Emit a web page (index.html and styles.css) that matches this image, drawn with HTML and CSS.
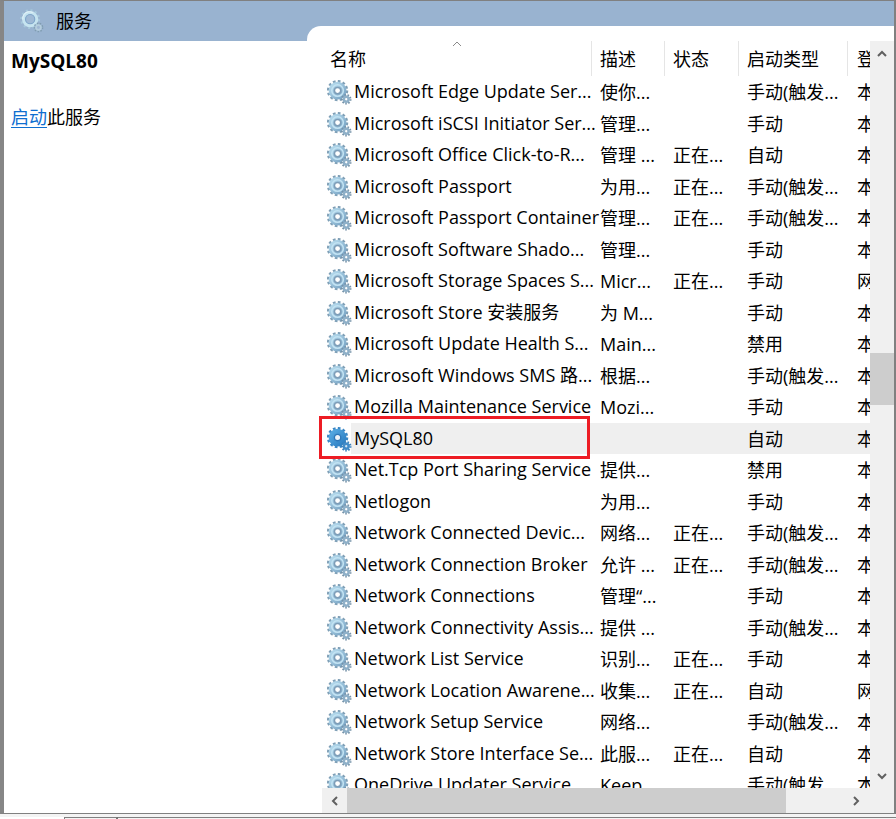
FILE: index.html
```
<!DOCTYPE html>
<html lang="zh-CN">
<head>
<meta charset="utf-8">
<title>服务</title>
<link rel="stylesheet" href="styles.css">
</head>
<body>
<svg class="defs" aria-hidden="true">
  <defs>
    <linearGradient id="pale" x1="0" y1="0" x2="1" y2="1"><stop offset="0" stop-color="#b4d9ec"/><stop offset="1" stop-color="#7ba6c6"/></linearGradient>
    <linearGradient id="vivid" x1="0" y1="0" x2="1" y2="1"><stop offset="0" stop-color="#55a8e0"/><stop offset="1" stop-color="#2e80c4"/></linearGradient>
  </defs>
  <symbol id="gear" viewBox="0 0 26 26">
    <circle cx="11" cy="11" r="9.5" fill="none" stroke="#7f9fb6" stroke-width="3.2" stroke-dasharray="2.7 2.27"/>
    <circle cx="11" cy="11" r="6.4" fill="none" stroke="url(#pale)" stroke-width="5.8"/>
    <circle cx="11" cy="11" r="6" fill="none" stroke="#c3e3f3" stroke-width="1.6"/>
    <circle cx="11" cy="11" r="3.3" fill="#fff" stroke="#7d9db8" stroke-width="1.6"/>
    <circle cx="20" cy="20" r="4.4" fill="none" stroke="#7693a9" stroke-width="2.2" stroke-dasharray="1.6 1.47"/>
    <circle cx="20" cy="20" r="2.5" fill="#fff" stroke="#8fb0c8" stroke-width="2.6"/>
  </symbol>
  <symbol id="gear-on" viewBox="0 0 26 26">
    <circle cx="11" cy="11" r="9.5" fill="none" stroke="#3a86c4" stroke-width="3.2" stroke-dasharray="2.7 2.27"/>
    <circle cx="11" cy="11" r="6.4" fill="none" stroke="url(#vivid)" stroke-width="5.8"/>
    <circle cx="11" cy="11" r="3.3" fill="#eef4fa" stroke="#2d77b8" stroke-width="1.4"/>
    <circle cx="20" cy="20" r="4.4" fill="none" stroke="#3a80bb" stroke-width="2.2" stroke-dasharray="1.6 1.47"/>
    <circle cx="20" cy="20" r="2.5" fill="#d6e6f3" stroke="#438cc8" stroke-width="2.6"/>
  </symbol>
  <symbol id="gear-title" viewBox="0 0 26 26">
    <circle cx="11" cy="11" r="9.6" fill="none" stroke="#a6c8dc" stroke-width="2.4" stroke-dasharray="2.2 2.83"/>
    <circle cx="11" cy="11" r="7" fill="none" stroke="#c6e4f0" stroke-width="3.6"/>
    <circle cx="10" cy="10" r="7" fill="none" stroke="#e0f1f7" stroke-width="1.2" stroke-dasharray="16 28" transform="rotate(170 10 10)"/>
    <circle cx="11" cy="11" r="5" fill="#9fb9d5" stroke="#7fa6ca" stroke-width="1.2"/>
    <circle cx="20" cy="20" r="4.4" fill="none" stroke="#7f9cb0" stroke-width="1.8" stroke-dasharray="1.6 1.47"/>
    <circle cx="20" cy="20" r="2.6" fill="#9fb7d3" stroke="#b4cddd" stroke-width="2"/>
  </symbol>
</svg>
<div class="window">
  <header class="titlebar">
    <svg class="title-icon"><use href="#gear-title"/></svg>
    <h1>服务</h1>
  </header>
  <main class="content">
    <aside class="detail">
      <h2>MySQL80</h2>
      <p><a href="#start">启动</a>此服务</p>
    </aside>
    <section class="pane">
      <div class="list">
        <svg class="sort" viewBox="0 0 10 6"><path d="M1 5 5 1 9 5"/></svg>
        <table>
          <colgroup><col class="c-name"><col class="c-desc"><col class="c-state"><col class="c-type"><col></colgroup>
          <thead><tr><th>名称</th><th>描述</th><th>状态</th><th>启动类型</th><th>登</th></tr></thead>
          <tbody>
            <tr><td><svg><use href="#gear"/></svg>Microsoft Edge Update Ser...</td><td>使你...</td><td></td><td>手动(触发...</td><td>本</td></tr>
            <tr><td><svg><use href="#gear"/></svg>Microsoft iSCSI Initiator Ser...</td><td>管理...</td><td></td><td>手动</td><td>本</td></tr>
            <tr><td><svg><use href="#gear"/></svg>Microsoft Office Click-to-R...</td><td>管理 ...</td><td>正在...</td><td>自动</td><td>本</td></tr>
            <tr><td><svg><use href="#gear"/></svg>Microsoft Passport</td><td>为用...</td><td>正在...</td><td>手动(触发...</td><td>本</td></tr>
            <tr><td><svg><use href="#gear"/></svg>Microsoft Passport Container</td><td>管理...</td><td>正在...</td><td>手动(触发...</td><td>本</td></tr>
            <tr><td><svg><use href="#gear"/></svg>Microsoft Software Shado...</td><td>管理...</td><td></td><td>手动</td><td>本</td></tr>
            <tr><td><svg><use href="#gear"/></svg>Microsoft Storage Spaces S...</td><td>Micr...</td><td>正在...</td><td>手动</td><td>网</td></tr>
            <tr><td><svg><use href="#gear"/></svg>Microsoft Store 安装服务</td><td>为 M...</td><td></td><td>手动</td><td>本</td></tr>
            <tr><td><svg><use href="#gear"/></svg>Microsoft Update Health S...</td><td>Main...</td><td></td><td>禁用</td><td>本</td></tr>
            <tr><td><svg><use href="#gear"/></svg>Microsoft Windows SMS 路...</td><td>根据...</td><td></td><td>手动(触发...</td><td>本</td></tr>
            <tr><td><svg><use href="#gear"/></svg>Mozilla Maintenance Service</td><td>Mozi...</td><td></td><td>手动</td><td>本</td></tr>
            <tr class="selected"><td><svg><use href="#gear-on"/></svg>MySQL80</td><td></td><td></td><td>自动</td><td>本</td></tr>
            <tr><td><svg><use href="#gear"/></svg>Net.Tcp Port Sharing Service</td><td>提供...</td><td></td><td>禁用</td><td>本</td></tr>
            <tr><td><svg><use href="#gear"/></svg>Netlogon</td><td>为用...</td><td></td><td>手动</td><td>本</td></tr>
            <tr><td><svg><use href="#gear"/></svg>Network Connected Devic...</td><td>网络...</td><td>正在...</td><td>手动(触发...</td><td>本</td></tr>
            <tr><td><svg><use href="#gear"/></svg>Network Connection Broker</td><td>允许 ...</td><td>正在...</td><td>手动(触发...</td><td>本</td></tr>
            <tr><td><svg><use href="#gear"/></svg>Network Connections</td><td>管理“...</td><td></td><td>手动</td><td>本</td></tr>
            <tr><td><svg><use href="#gear"/></svg>Network Connectivity Assis...</td><td>提供 ...</td><td></td><td>手动(触发...</td><td>本</td></tr>
            <tr><td><svg><use href="#gear"/></svg>Network List Service</td><td>识别...</td><td>正在...</td><td>手动</td><td>本</td></tr>
            <tr><td><svg><use href="#gear"/></svg>Network Location Awarene...</td><td>收集...</td><td>正在...</td><td>自动</td><td>网</td></tr>
            <tr><td><svg><use href="#gear"/></svg>Network Setup Service</td><td>网络...</td><td></td><td>手动(触发...</td><td>本</td></tr>
            <tr><td><svg><use href="#gear"/></svg>Network Store Interface Se...</td><td>此服...</td><td>正在...</td><td>自动</td><td>本</td></tr>
            <tr><td><svg><use href="#gear"/></svg>OneDrive Updater Service</td><td>Keep</td><td></td><td>手动(触发</td><td>本</td></tr>
          </tbody>
        </table>
      </div>
      <div class="vscroll">
        <button aria-label="向上滚动"><svg viewBox="0 0 12 12"><path d="M2 8 6 4 10 8"/></svg></button>
        <div class="vbefore"></div><div class="vthumb"></div><div class="vafter"></div>
        <button aria-label="向下滚动"><svg viewBox="0 0 12 12"><path d="M2 4 6 8 10 4"/></svg></button>
      </div>
      <div class="hscroll">
        <button aria-label="向左滚动"><svg viewBox="0 0 12 12"><path d="M8 2 4 6 8 10"/></svg></button>
        <div class="hthumb"></div><div class="hafter"></div>
        <button aria-label="向右滚动"><svg viewBox="0 0 12 12"><path d="M4 2 8 6 4 10"/></svg></button>
        <div class="corner"></div>
      </div>
    </section>
  </main>
</div>
<footer class="tabs"><span class="tab-on"></span><span class="tab"></span><span class="tab-rest"></span></footer>
</body>
</html>
```
FILE: styles.css
```
* { box-sizing: border-box; }
body {
  margin: 0;
  height: 100vh;
  display: flex;
  flex-direction: column;
  overflow: hidden;
  background: #f4f4f4;
  color: #000;
  font: 18px/24px "Open Sans", "Noto Sans CJK SC", sans-serif;
}
.defs { position: absolute; width: 0; height: 0; }
.window {
  flex: 1;
  min-height: 0;
  display: flex;
  flex-direction: column;
  background: #fff;
  border: solid #808080;
  border-width: 1px 2px 1px 4px;
  border-left-color: #868686;
}
.titlebar {
  display: flex;
  align-items: center;
  height: 40px;
  flex: none;
  padding-left: 16px;
  background: #99b3d0;
}
.title-icon { width: 24px; height: 24px; margin-right: 12px; }
h1 { margin: 0; font-size: 18px; font-weight: 400; }
.content { flex: 1; min-height: 0; display: flex; }
.detail { width: 303px; flex: none; padding: 8px 7px; }
h2 { margin: 0 0 32px; font-size: 19px; line-height: 24px; font-weight: 700; }
.detail p { margin: 0; }
.detail a { color: #0f6fd0; text-underline-offset: 3px; }
.pane {
  flex: 1;
  min-width: 0;
  margin-top: -15px;
  padding-top: 15px;
  background: #fff;
  border-top-left-radius: 14px;
  display: grid;
  grid-template: minmax(0, 1fr) 25px / minmax(0, 1fr) 24px;
}
.list { position: relative; overflow: hidden; }
.sort {
  position: absolute;
  top: 0;
  left: 145px;
  width: 10px;
  height: 6px;
}
.sort path { fill: none; stroke: #8a8a8a; }
table { width: 100%; table-layout: fixed; border-collapse: separate; border-spacing: 0; }
.c-name { width: 285px; }
.c-desc { width: 73px; }
.c-state { width: 74px; }
.c-type { width: 109px; }
th, td { padding: 0 0 0 8px; text-align: left; white-space: nowrap; font-weight: 400; }
th { height: 35px; border-right: 1px solid #e5e5e5; }
th:first-child { padding-left: 23px; }
th:last-child { border-right: 0; }
th:last-child, td:last-child { padding-left: 9px; }
td { height: 31px; }
tr:nth-child(odd) td { height: 32px; }
td:first-child { padding-left: 20px; }
td svg { width: 25px; height: 25px; margin-right: 2px; vertical-align: -7px; }
.selected td { background: #efefef; }
.selected td:first-child {
  position: relative;
  background: linear-gradient(to right, #fff 44px, #efefef 44px);
}
.selected td:first-child::after {
  content: "";
  position: absolute;
  inset: -7px 2px -5px 12px;
  border: 3px solid #ed1c24;
}
button {
  display: grid;
  place-items: center;
  width: 25px;
  height: 25px;
  flex: none;
  padding: 0;
  border: 0;
  background: none;
}
button svg { width: 12px; height: 12px; }
button path { fill: none; stroke: #606060; stroke-width: 2; }
.vscroll, .hscroll { display: flex; background: #f0f0f0; }
.vscroll { flex-direction: column; align-items: center; }
.vbefore { flex: 287; }
.vthumb { flex: 52; width: 24px; background: #cdcdcd; }
.vafter { flex: 357; }
.hscroll { grid-column: 1 / -1; margin-left: 15px; }
.hthumb { flex: 439; background: #cdcdcd; }
.hafter { flex: 57; }
.corner { width: 26px; }
.tabs { display: flex; height: 5px; flex: none; padding-top: 3px; }
.tabs span { height: 2px; border-top: 1px solid #808080; }
.tabs .tab-on { width: 64px; border-color: #fff; background: #fff; }
.tab { width: 54px; border-left: 1px solid #808080; border-right: 2px solid #707070; }
.tab-rest { flex: 1; }
```
